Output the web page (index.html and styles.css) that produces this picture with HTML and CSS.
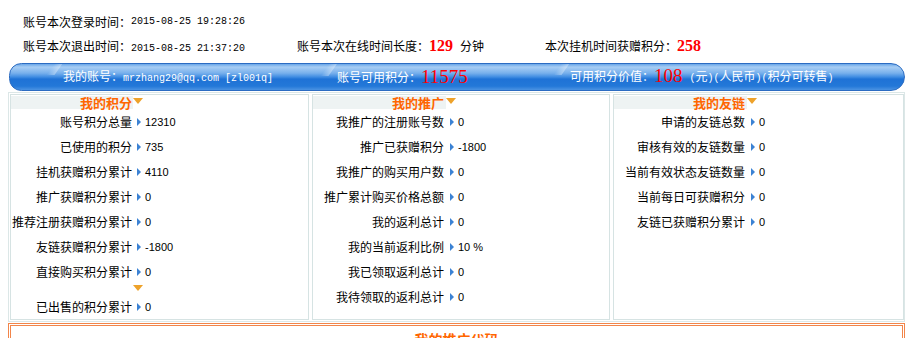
FILE: index.html
```html
<!DOCTYPE html>
<html lang="zh-CN">
<head>
    <meta charset="UTF-8">
    <title>我的积分</title>
    <link rel="stylesheet" href="styles.css">
</head>
<body>
    <!-- 登录信息 -->
    <div class="info">
        <div class="line">账号本次登录时间：<span class="mono">2015-08-25 19:28:26</span></div>
        <div class="line">
            <span class="c1">账号本次退出时间：<span class="mono">2015-08-25 21:37:20</span></span>
            <span class="c2">账号本次在线时间长度：<b class="num gap">129</b>分钟</span>
            <span>本次挂机时间获赠积分：<b class="num">258</b></span>
        </div>
    </div>

    <!-- 蓝色账号条 -->
    <div class="bar">
        <span class="seg s1">我的账号：<span class="mono">mrzhang29@qq.com [zl001q]</span></span>
        <span class="seg s2">账号可用积分：<span class="big">11575</span></span>
        <span class="seg s3">可用积分价值：<span class="big gap">108</span><span class="mono">(</span>元<span class="mono">)(</span>人民币<span class="mono">)(</span>积分可转售<span class="mono">)</span></span>
    </div>

    <!-- 三栏统计 -->
    <div class="panels">
        <div class="panel p1">
            <div class="row head"><span class="lbl">我的积分</span><span class="down"></span></div>
            <div class="row"><span class="lbl">账号积分总量</span><span class="val"><i class="arr"></i>12310</span></div>
            <div class="row"><span class="lbl">已使用的积分</span><span class="val"><i class="arr"></i>735</span></div>
            <div class="row"><span class="lbl">挂机获赠积分累计</span><span class="val"><i class="arr"></i>4110</span></div>
            <div class="row"><span class="lbl">推广获赠积分累计</span><span class="val"><i class="arr"></i>0</span></div>
            <div class="row"><span class="lbl">推荐注册获赠积分累计</span><span class="val"><i class="arr"></i>0</span></div>
            <div class="row"><span class="lbl">友链获赠积分累计</span><span class="val"><i class="arr"></i>-1800</span></div>
            <div class="row"><span class="lbl">直接购买积分累计</span><span class="val"><i class="arr"></i>0</span></div>
            <div class="row more"><span class="lbl"></span><span class="down"></span></div>
            <div class="row"><span class="lbl">已出售的积分累计</span><span class="val"><i class="arr"></i>0</span></div>
        </div>
        <div class="panel">
            <div class="row head"><span class="lbl">我的推广</span><span class="down"></span></div>
            <div class="row"><span class="lbl">我推广的注册账号数</span><span class="val"><i class="arr"></i>0</span></div>
            <div class="row"><span class="lbl">推广已获赠积分</span><span class="val"><i class="arr"></i>-1800</span></div>
            <div class="row"><span class="lbl">我推广的购买用户数</span><span class="val"><i class="arr"></i>0</span></div>
            <div class="row"><span class="lbl">推广累计购买价格总额</span><span class="val"><i class="arr"></i>0</span></div>
            <div class="row"><span class="lbl">我的返利总计</span><span class="val"><i class="arr"></i>0</span></div>
            <div class="row"><span class="lbl">我的当前返利比例</span><span class="val"><i class="arr"></i>10 %</span></div>
            <div class="row"><span class="lbl">我已领取返利总计</span><span class="val"><i class="arr"></i>0</span></div>
            <div class="row"><span class="lbl">我待领取的返利总计</span><span class="val"><i class="arr"></i>0</span></div>
        </div>
        <div class="panel">
            <div class="row head"><span class="lbl">我的友链</span><span class="down"></span></div>
            <div class="row"><span class="lbl">申请的友链总数</span><span class="val"><i class="arr"></i>0</span></div>
            <div class="row"><span class="lbl">审核有效的友链数量</span><span class="val"><i class="arr"></i>0</span></div>
            <div class="row"><span class="lbl">当前有效状态友链数量</span><span class="val"><i class="arr"></i>0</span></div>
            <div class="row"><span class="lbl">当前每日可获赠积分</span><span class="val"><i class="arr"></i>0</span></div>
            <div class="row"><span class="lbl">友链已获赠积分累计</span><span class="val"><i class="arr"></i>0</span></div>
        </div>
    </div>

    <!-- 推广代码 -->
    <div class="code-box">
        <h3>我的推广代码</h3>
    </div>
</body>
</html>
```

FILE: styles.css
```css
body {
    margin: 0;
    background-color: #fff;
    color: #000;
    font-family: "Noto Sans CJK SC", sans-serif;
    font-size: 12px;
    overflow: hidden;
}
.mono {
    font-family: "Liberation Mono", monospace;
    font-size: 10px;
}
.gap {
    margin-right: 7px;
}

/* top info */
.info {
    padding: 10px 0 0 23px;
}
.line {
    display: flex;
    height: 24px;
    line-height: 24px;
    white-space: nowrap;
}
.c1 {
    width: 274px;
}
.c2 {
    width: 248px;
}
.num {
    color: #f00;
    font-family: "Liberation Serif", serif;
    font-size: 16px;
}

/* blue bar */
.bar {
    display: flex;
    align-items: center;
    height: 26px;
    margin: 5px 1px 0 9px;
    padding-left: 53px;
    border: 1px solid #2c6cc2;
    border-radius: 14px 16px 16px 14px;
    background: linear-gradient(to bottom, #6aa6e8 0%, #a7cdf4 12%, #78b0ec 35%, #3f8ce2 50%, #1f72d6 58%, #2378d8 85%, #4a92e2 100%);
    color: #fff;
    white-space: nowrap;
    overflow: hidden;
}
.seg {
    position: relative;
    line-height: 26px;
}
.seg::before {
    content: "";
    position: absolute;
    top: -1px;
    left: -12px;
    width: 8px;
    height: 13px;
    background: linear-gradient(to right, rgba(255, 255, 255, 0), rgba(255, 255, 255, 0.35));
    transform: skewX(-35deg);
}
.s1 {
    width: 274px;
}
.s2 {
    width: 233px;
}
.big {
    color: #f00;
    font-family: "Liberation Serif", serif;
    font-size: 19px;
    vertical-align: -1px;
}

/* panels */
.panels {
    display: grid;
    grid-template-columns: 299px 298px 291px;
    gap: 3px;
    margin: 1px 1px 0 8px;
    padding: 1px;
    border: 1px solid #dce7e7;
}
.panel {
    border: 1px solid #d6e3e3;
}
.row {
    display: flex;
    align-items: center;
    height: 25px;
    white-space: nowrap;
}
.lbl {
    width: 131px;
    padding-right: 2px;
    text-align: right;
}
.p1 .lbl {
    width: 121px;
    padding-right: 1px;
}
.row.head {
    height: 14px;
    align-items: flex-start;
}
.head .lbl {
    height: 13px;
    margin-top: 1px;
    line-height: 13px;
    background-color: #eef3f3;
    color: #ff6600;
    font-size: 13px;
    font-weight: bold;
}
.down {
    width: 0;
    height: 0;
    margin-top: 3px;
    border-top: 6px solid #eea22a;
    border-left: 5px solid transparent;
    border-right: 5px solid transparent;
}
.row.more {
    height: 10px;
    align-items: flex-start;
}
.more .down {
    margin-top: 1px;
}
.val {
    display: flex;
    align-items: center;
    padding-left: 4px;
    font-family: "Liberation Sans", sans-serif;
    font-size: 11px;
}
.arr {
    width: 0;
    height: 0;
    margin-right: 4px;
    border-left: 4px solid #3b82d4;
    border-top: 4px solid transparent;
    border-bottom: 4px solid transparent;
}

/* code box */
.code-box {
    height: 40px;
    margin: 1px 1px 0 8px;
    border: 3px double #f2854a;
}
.code-box h3 {
    margin: 0;
    padding-top: 4px;
    text-align: center;
    color: #ff6600;
    font-size: 14px;
    line-height: 18px;
}
```
